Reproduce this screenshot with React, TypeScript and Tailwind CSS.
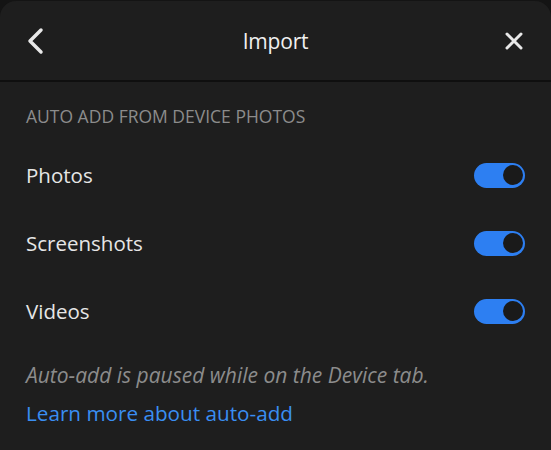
const sources = ['Photos', 'Screenshots', 'Videos']

function Toggle() {
  return (
    <div className="w-[51px] h-[25px] rounded-full bg-[#2d7ff2] flex items-center justify-end pr-[2.5px]">
      <div className="w-[20px] h-[20px] rounded-full bg-[#1a1a1a]" />
    </div>
  )
}

export default function App() {
  return (
    <div className="w-[551px] h-[450px] bg-[#141414] overflow-hidden" style={{ fontFamily: '"Open Sans", sans-serif' }}>
      <div className="h-full rounded-t-[16px] bg-[#1e1e1e] mt-[1px]">
        {/* Header */}
        <div className="h-[81px] flex items-center justify-between pl-[26px] pr-[28px] border-b-2 border-[#0f0f0f]">
          <svg width="20" height="28" viewBox="0 0 20 28" fill="none" className="mt-[1px]">
            <polyline points="15,3 4,14 15,25" stroke="#e8e8e8" strokeWidth="3.5" strokeLinecap="round" strokeLinejoin="round" />
          </svg>
          <h1 className="text-[21px] text-[#f0f0f0] tracking-[-0.2px] mt-[2px]">Import</h1>
          <svg width="18" height="18" viewBox="0 0 18 18" fill="none" className="mt-[1px]">
            <path d="M2 2 L16 16 M16 2 L2 16" stroke="#e8e8e8" strokeWidth="3" strokeLinecap="round" />
          </svg>
        </div>

        {/* Body */}
        <div className="px-[26px] pt-[22px]">
          <p className="text-[17.5px] text-[#8c8c8c] uppercase leading-[24px]">Auto add from device photos</p>
          <div className="mt-[13px]">
            {sources.map((s) => (
              <div key={s} className="h-[68px] flex items-center justify-between">
                <span className="text-[20.5px] text-[#e6e6e6]">{s}</span>
                <Toggle />
              </div>
            ))}
          </div>
          <p className="mt-[16px] text-[21px] italic text-[#8c8c8c] leading-[28px]">
            Auto-add is paused while on the Device tab.
          </p>
          <p className="mt-[10px] text-[20.7px] text-[#3a8ef2] leading-[28px]">Learn more about auto-add</p>
        </div>
      </div>
    </div>
  )
}
